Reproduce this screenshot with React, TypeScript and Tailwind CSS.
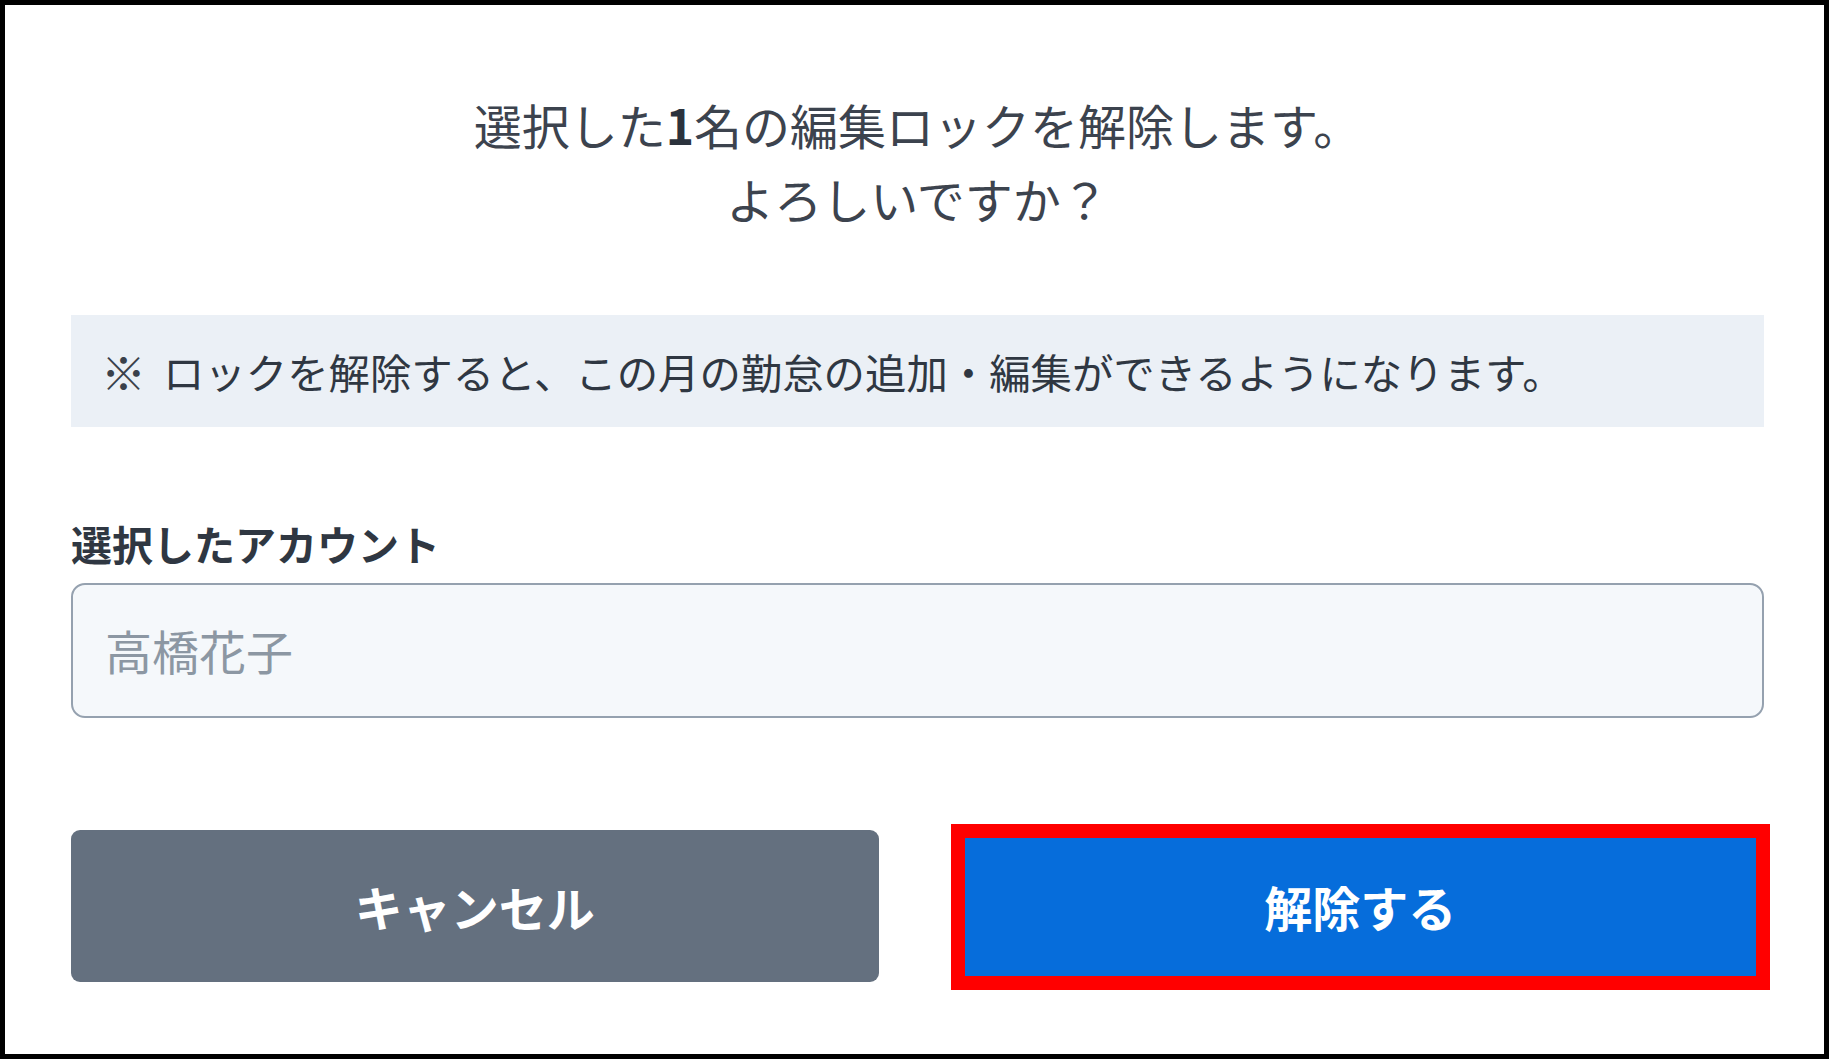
import React from "react";

export default function App() {
  return (
    <div className="box-border flex h-[1059px] w-full flex-col border-[5px] border-black bg-white pl-[66px] pr-[60px] pt-[82px] font-['Noto_Sans_CJK_JP',sans-serif]">
      <div className="text-center text-[48px] leading-[74px] text-[#3c434e]">
        <p>
          選択した<span className="font-bold text-[#2b323c]">1</span>名の編集ロックを解除します。
        </p>
        <p>よろしいですか？</p>
      </div>

      <div className="mt-[80px] flex h-[112px] items-center bg-[#ebf0f6] pl-[30px] text-[41.4px] text-[#2f3742]">
        <span className="mr-[17px] text-[45px] font-bold leading-none text-[#3a414b]">※</span>
        <span>ロックを解除すると、この月の勤怠の追加・編集ができるようになります。</span>
      </div>

      <label className="mt-[86px] block text-[41px] font-bold leading-[60px] text-[#2f3742]">
        選択したアカウント
      </label>
      <div className="mt-[10px] box-border flex h-[135px] items-center rounded-[14px] border-2 border-[#95a1af] bg-[#f5f8fb] pl-[32px] text-[47px] text-[#8c97a3]">
        高橋花子
      </div>

      <div className="mt-[112px] flex gap-[78px]">
        <div className="flex h-[152px] flex-1 items-center justify-center rounded-[9px] bg-[#64707f] text-[48px] font-bold text-white">
          キャンセル
        </div>
        <div className="relative flex h-[152px] flex-1 items-center justify-center rounded-[9px] bg-[#066ddb] text-[48px] font-bold text-white">
          解除する
          <div className="pointer-events-none absolute -bottom-[8px] -left-[6px] -right-[6px] -top-[6px] border-[14px] border-[#ff0000]" />
        </div>
      </div>
    </div>
  );
}
